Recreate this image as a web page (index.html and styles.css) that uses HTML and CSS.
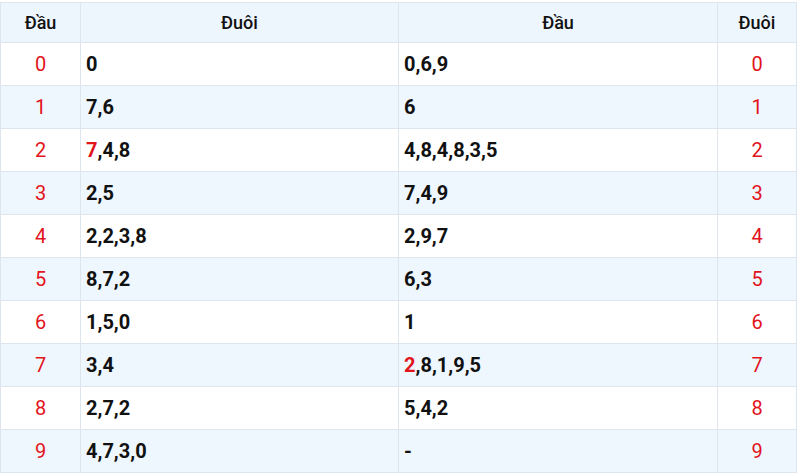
FILE: index.html
```html
<!DOCTYPE html>
<html>
<head>
<meta charset="utf-8">
<link rel="stylesheet" href="styles.css">
</head>
<body>
<table class="loto">
  <colgroup>
    <col class="c1"><col class="c2"><col class="c3"><col class="c4">
  </colgroup>
  <thead>
    <tr><th>Đầu</th><th>Đuôi</th><th>Đầu</th><th>Đuôi</th></tr>
  </thead>
  <tbody>
    <tr><td class="num">0</td><td class="val">0</td><td class="val">0,6,9</td><td class="num">0</td></tr>
    <tr><td class="num">1</td><td class="val">7,6</td><td class="val">6</td><td class="num">1</td></tr>
    <tr><td class="num">2</td><td class="val"><span class="hl">7</span>,4,8</td><td class="val">4,8,4,8,3,5</td><td class="num">2</td></tr>
    <tr><td class="num">3</td><td class="val">2,5</td><td class="val">7,4,9</td><td class="num">3</td></tr>
    <tr><td class="num">4</td><td class="val">2,2,3,8</td><td class="val">2,9,7</td><td class="num">4</td></tr>
    <tr><td class="num">5</td><td class="val">8,7,2</td><td class="val">6,3</td><td class="num">5</td></tr>
    <tr><td class="num">6</td><td class="val">1,5,0</td><td class="val">1</td><td class="num">6</td></tr>
    <tr><td class="num">7</td><td class="val">3,4</td><td class="val"><span class="hl">2</span>,8,1,9,5</td><td class="num">7</td></tr>
    <tr><td class="num">8</td><td class="val">2,7,2</td><td class="val">5,4,2</td><td class="num">8</td></tr>
    <tr><td class="num">9</td><td class="val">4,7,3,0</td><td class="val">-</td><td class="num">9</td></tr>
  </tbody>
</table>
</body>
</html>
```
FILE: styles.css
```css
html, body {
  margin: 0;
  padding: 0;
  background: #ffffff;
}
body {
  padding-top: 2px;
  font-family: Roboto, "Liberation Sans", sans-serif;
}
.loto {
  border-collapse: collapse;
  width: 796px;
  table-layout: fixed;
}
.c1 { width: 80px; }
.c2 { width: 318px; }
.c3 { width: 319px; }
.c4 { width: 79px; }
.loto th, .loto td {
  border: 1px solid #dfe5ec;
  padding: 0;
}
.loto th {
  height: 39px;
  background: #eef6fd;
  font-weight: 500;
  font-size: 18px;
  color: #111;
  text-align: center;
}
.loto td {
  height: 42px;
}
.loto tbody tr:nth-child(even) td {
  background: #eff7fe;
}
.num {
  text-align: center;
  color: #e2141c;
  font-size: 20px;
}
.val {
  text-align: left;
  padding-left: 5px !important;
  font-weight: 700;
  font-size: 20px;
  color: #111;
}
.hl {
  color: #e2141c;
}
```
